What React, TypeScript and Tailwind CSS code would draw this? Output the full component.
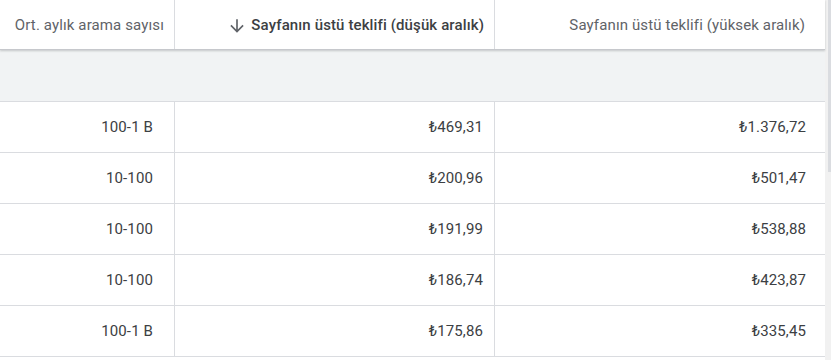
import React from "react";

const rows = [
  ["100-1 B", "₺469,31", "₺1.376,72"],
  ["10-100", "₺200,96", "₺501,47"],
  ["10-100", "₺191,99", "₺538,88"],
  ["10-100", "₺186,74", "₺423,87"],
  ["100-1 B", "₺175,86", "₺335,45"],
];

export default function App() {
  return (
    <div
      className="w-[831px] h-[360px] overflow-hidden bg-white flex tracking-[0.12px]"
      style={{ fontFamily: "Roboto, 'Liberation Sans', sans-serif" }}
    >
      <div className="w-[825px] flex flex-col">
        {/* header */}
        <div className="flex h-[50px] border-b border-[#c6c8cc] shadow-[0_1px_2px_rgba(60,64,67,0.25)] relative z-10 text-[15px]">
          <div className="w-[175px] border-r border-[#dadce0] flex items-center justify-end pr-[10px] pt-[2px] text-[#5f6368]">
            Ort. aylık arama sayısı
          </div>
          <div className="w-[320px] border-r border-[#dadce0] flex items-center justify-end pr-[10px] pt-[2px] text-[#3c4043] font-medium gap-[4px]">
            <svg width="20" height="20" viewBox="0 0 24 24" className="text-[#5f6368]">
              <path
                fill="currentColor"
                d="M20 12l-1.41-1.41L13 16.17V4h-2v12.17l-5.58-5.59L4 12l8 8 8-8z"
              />
            </svg>
            <span>Sayfanın üstü teklifi (düşük aralık)</span>
          </div>
          <div className="flex-1 flex items-center justify-end pr-[20px] pt-[2px] text-[#5f6368]">
            Sayfanın üstü teklifi (yüksek aralık)
          </div>
        </div>
        {/* gray band */}
        <div className="h-[52px] bg-[#f1f3f4] border-b border-[#dadce0] shrink-0" />
        {rows.map((r, i) => (
          <div key={i} className="flex h-[51px] border-b border-[#dadce0] text-[15px] text-[#3c4043] shrink-0">
            <div className="w-[175px] border-r border-[#dadce0] flex items-center justify-end pr-[21px]">
              {r[0]}
            </div>
            <div className="w-[320px] border-r border-[#dadce0] flex items-center justify-end pr-[11px]">
              {r[1]}
            </div>
            <div className="flex-1 flex items-center justify-end pr-[19px]">{r[2]}</div>
          </div>
        ))}
      </div>
      {/* scrollbar */}
      <div className="w-[6px] h-full bg-[#f1f1f1] flex justify-end">
        <div className="w-[3px] h-[172px] bg-[#dadce0]" />
      </div>
    </div>
  );
}
